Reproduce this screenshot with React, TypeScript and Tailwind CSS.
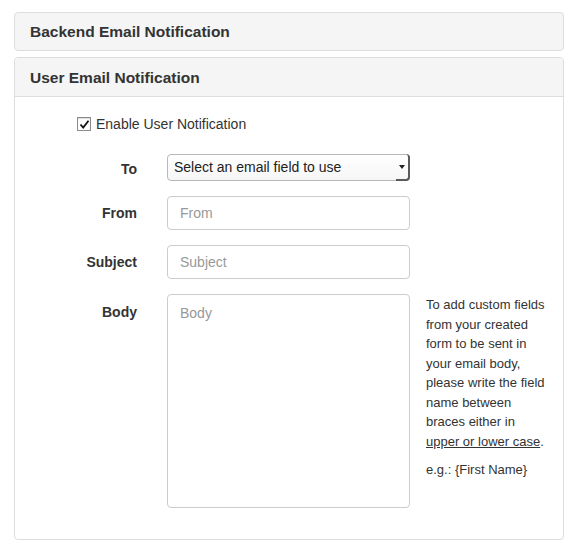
import React from "react";

const font = { fontFamily: '"Liberation Sans", Arial, sans-serif' };

export default function App() {
  return (
    <div className="w-[578px] h-[554px] bg-white text-[#333] pt-[12px] px-[14px]" style={font}>
      <div className="w-[550px] h-[39px] border border-[#ddd] rounded-[4px] bg-[#f5f5f5] flex items-center pl-[15px] pt-[1px]">
        <span className="text-[15.5px] font-bold text-[#333]">Backend Email Notification</span>
      </div>
      <div className="w-[550px] h-[483px] mt-[6px] border border-[#ddd] rounded-[4px] bg-white">
        <div className="h-[39px] border-b border-[#ddd] bg-[#f5f5f5] rounded-t-[4px] flex items-center pl-[15px] pt-[1px]">
          <span className="text-[15.5px] font-bold text-[#333]">User Email Notification</span>
        </div>
        <div className="pt-[20px]">
          <div className="flex items-center pl-[62px] h-[14px]">
            <div className="w-[14px] h-[14px] border border-[#8a8a8a] bg-white flex items-center justify-center shadow-[inset_0_1px_1px_rgba(0,0,0,0.15)]">
              <svg width="11" height="11" viewBox="0 0 11 11">
                <path d="M1.5 5.5 L4.2 8.5 L9.5 1.8" stroke="#111" strokeWidth="1.8" fill="none" />
              </svg>
            </div>
            <span className="ml-[5px] text-[14px] text-[#333]">Enable User Notification</span>
          </div>

          <div className="flex items-center mt-[23px]">
            <div className="w-[122px] text-right text-[14px] font-bold pt-[4px]">To</div>
            <div className="ml-[30px] w-[243px] h-[27px] border border-[#b8b8b8] rounded-[4px] bg-gradient-to-b from-white to-[#f6f6f6] flex items-center relative">
              <span className="pl-[6px] text-[14px] text-[#222]">Select an email field to use</span>
              <div className="absolute right-[-1px] top-[-1px] w-[14px] h-[27px] rounded-r-[4px] border-r-[2px] border-b-[2px] border-[#5a5a5a] flex items-center justify-center">
                <svg width="6" height="4" viewBox="0 0 6 4">
                  <path d="M0 0 L6 0 L3 4 Z" fill="#222" />
                </svg>
              </div>
            </div>
          </div>

          <div className="flex items-center mt-[15px]">
            <div className="w-[122px] text-right text-[14px] font-bold">From</div>
            <div className="ml-[30px] w-[243px] h-[34px] border border-[#ccc] rounded-[4px] flex items-center pl-[12px] pt-[1px] text-[14px] text-[#999]">From</div>
          </div>

          <div className="flex items-center mt-[15px]">
            <div className="w-[122px] text-right text-[14px] font-bold">Subject</div>
            <div className="ml-[30px] w-[243px] h-[34px] border border-[#ccc] rounded-[4px] flex items-center pl-[12px] pt-[1px] text-[14px] text-[#999]">Subject</div>
          </div>

          <div className="flex items-start mt-[15px]">
            <div className="w-[122px] text-right text-[14px] font-bold pt-[8px]">Body</div>
            <div className="ml-[30px] w-[243px] h-[214px] border border-[#ccc] rounded-[4px] pl-[12px] pt-[8px] text-[14px] text-[#999]">Body</div>
            <div className="ml-[16px] w-[123px] text-[13px] leading-[19.5px] text-[#333] pt-[1px]">
              <p>
                To add custom fields from your created form to be sent in your email body, please write the field name between braces either in <span className="underline">upper or lower case</span>.
              </p>
              <p className="mt-[9px]">e.g.: {"{First Name}"}</p>
            </div>
          </div>
        </div>
      </div>
    </div>
  );
}
